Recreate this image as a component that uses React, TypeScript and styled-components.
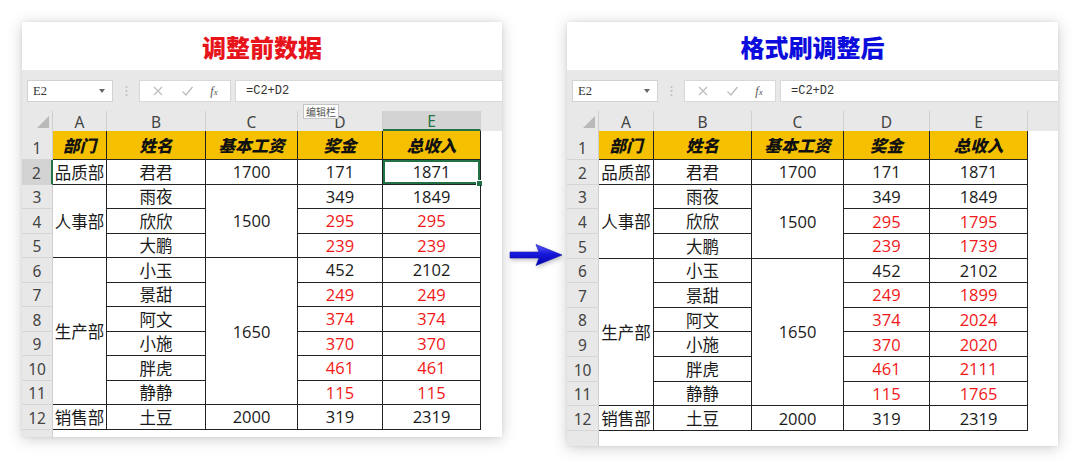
import React from 'react';
import styled, { createGlobalStyle } from 'styled-components';

const CJK = `"Open Sans", "Noto Sans CJK SC", sans-serif`;
const UI = `"Noto Sans", "Noto Sans CJK SC", sans-serif`;

const Global = createGlobalStyle`
  html, body { margin: 0; padding: 0; background: #ffffff; }
  body { width: 1080px; height: 468px; overflow: hidden; font-family: ${CJK}; }
`;

const Page = styled.div`
  display: flex;
  align-items: flex-start;
  box-sizing: border-box;
  width: 1080px;
  height: 468px;
  padding: 22px 0 0 22px;
`;

const Card = styled.div<{ $w: number; $h: number }>`
  position: relative;
  flex: none;
  width: ${(p) => p.$w}px;
  height: ${(p) => p.$h}px;
  display: flex;
  flex-direction: column;
  background: #fff;
  overflow: hidden;
  box-shadow: 0 2px 14px rgba(0, 0, 0, 0.2), 0 0 3px rgba(0, 0, 0, 0.08);
`;

const Title = styled.div<{ $color: string }>`
  flex: none;
  height: 48px;
  display: flex;
  align-items: center;
  justify-content: center;
  font: 900 24px "Noto Sans CJK SC", sans-serif;
  color: ${(p) => p.$color};
`;

const Toolbar = styled.div`
  flex: none;
  height: 41px;
  box-sizing: border-box;
  padding: 10px 0 0 5px;
  display: flex;
  align-items: flex-start;
  background: #e8e8e8;
`;

const NameBox = styled.div`
  flex: none;
  width: 86px;
  height: 22px;
  box-sizing: border-box;
  border: 1px solid #d2d2d2;
  background: #fff;
  display: flex;
  align-items: center;
  justify-content: space-between;
  padding: 0 7px 0 5px;
  font: 12.5px "Liberation Serif", serif;
  color: #333;
`;

const Caret = styled.span`
  width: 0;
  height: 0;
  border-left: 3.5px solid transparent;
  border-right: 3.5px solid transparent;
  border-top: 4px solid #666;
`;

const Grip = styled.div`
  flex: none;
  width: 26px;
  height: 22px;
  display: flex;
  align-items: center;
  justify-content: center;
`;

const FxBox = styled.div`
  flex: none;
  width: 92px;
  height: 22px;
  box-sizing: border-box;
  border: 1px solid #d8d8d8;
  background: #fff;
  display: flex;
  align-items: center;
  justify-content: space-around;
  padding: 0 4px;
`;

const Fx = styled.span`
  font: italic 12px "Liberation Serif", serif;
  color: #555;
  & > small { font-size: 9px; }
`;

const Formula = styled.div`
  flex: 1;
  height: 22px;
  margin-left: 4px;
  box-sizing: border-box;
  border: 1px solid #d8d8d8;
  border-right: none;
  background: #fff;
  display: flex;
  align-items: center;
  padding-left: 10px;
  font: 12px "Liberation Mono", monospace;
  color: #333;
`;

const Sheet = styled.div<{ $cols: string; $rows: string }>`
  flex: 1;
  display: grid;
  grid-template-columns: ${(p) => p.$cols};
  grid-template-rows: ${(p) => p.$rows};
  background: #fff;
`;

const Corner = styled.div`
  grid-row: 1;
  grid-column: 1;
  position: relative;
  background: #e8e8e8;
  border-right: 1px solid #cfcfcf;
  &::after {
    content: '';
    position: absolute;
    right: 3px;
    bottom: 3px;
    width: 0;
    height: 0;
    border-left: 12px solid transparent;
    border-bottom: 12px solid #b9b9b9;
  }
`;

const ColHead = styled.div<{ $col: number; $active?: boolean }>`
  grid-row: 1;
  grid-column: ${(p) => p.$col};
  box-sizing: border-box;
  display: flex;
  align-items: center;
  justify-content: center;
  background: ${(p) => (p.$active ? '#d3d3d3' : '#e8e8e8')};
  border-right: 1px solid #cfcfcf;
  border-bottom: ${(p) => (p.$active ? '2px solid #217346' : 'none')};
  font: 15.5px ${UI};
  color: ${(p) => (p.$active ? '#217346' : '#444')};
  padding-top: 1px;
`;

const HeadFill = styled.div`
  grid-row: 1;
  grid-column: 7;
  background: #e8e8e8;
`;

const RowHead = styled.div<{ $row: number; $active?: boolean }>`
  grid-row: ${(p) => p.$row};
  grid-column: 1;
  box-sizing: border-box;
  display: flex;
  align-items: flex-end;
  justify-content: center;
  padding-bottom: 1px;
  background: ${(p) => (p.$active ? '#d3d3d3' : '#e8e8e8')};
  border-bottom: 1px solid #d5d5d5;
  border-right: ${(p) => (p.$active ? '2px solid #217346' : '1px solid #cfcfcf')};
  font: 15.5px ${UI};
  line-height: 20px;
  color: #444;
`;

const Head = styled.div<{ $col: number }>`
  grid-row: 2;
  grid-column: ${(p) => p.$col};
  box-sizing: border-box;
  display: flex;
  align-items: center;
  justify-content: center;
  background: #f5c000;
  border-right: 1px solid #222;
  border-bottom: 1px solid #222;
  font: italic 900 16.5px "Noto Sans CJK SC", sans-serif;
  color: #111;
`;

const Cell = styled.div<{ $row: number; $col: number; $span?: number; $red?: boolean; $selected?: boolean }>`
  grid-row: ${(p) => p.$row} / span ${(p) => p.$span ?? 1};
  grid-column: ${(p) => p.$col};
  position: relative;
  box-sizing: border-box;
  display: flex;
  align-items: center;
  justify-content: center;
  border-right: 1px solid #222;
  border-bottom: 1px solid #222;
  font-size: 16.5px;
  color: ${(p) => (p.$red ? '#f01818' : '#1a1a1a')};
  box-shadow: ${(p) => (p.$selected ? 'inset 0 0 0 2px #217346' : 'none')};
  &::after {
    content: '';
    display: ${(p) => (p.$selected ? 'block' : 'none')};
    position: absolute;
    right: -3px;
    bottom: -3px;
    width: 5px;
    height: 5px;
    background: #217346;
    border: 1px solid #fff;
  }
`;

const BottomHead = styled.div`
  grid-row: 14;
  grid-column: 1;
  background: #e8e8e8;
  border-right: 1px solid #cfcfcf;
`;

const Tip = styled.div`
  position: absolute;
  left: 281px;
  top: 82px;
  height: 13px;
  padding: 0 2px;
  background: #fff;
  border: 1px solid #c4c4c4;
  font: 10px "Noto Sans CJK SC", sans-serif;
  line-height: 13px;
  color: #555;
`;

const ArrowWrap = styled.div`
  flex: none;
  width: 65px;
  box-sizing: border-box;
  padding: 221px 0 0 7px;
  & svg { display: block; filter: drop-shadow(1px 2px 2px rgba(0, 0, 0, 0.25)); }
`;

type Row = { dept?: [string, number]; name: string; base?: [string, number]; bonus: string; total: string; red?: boolean };

const before: Row[] = [
  { dept: ['品质部', 1], name: '君君', base: ['1700', 1], bonus: '171', total: '1871' },
  { dept: ['人事部', 3], name: '雨夜', base: ['1500', 3], bonus: '349', total: '1849' },
  { name: '欣欣', bonus: '295', total: '295', red: true },
  { name: '大鹏', bonus: '239', total: '239', red: true },
  { dept: ['生产部', 6], name: '小玉', base: ['1650', 6], bonus: '452', total: '2102' },
  { name: '景甜', bonus: '249', total: '249', red: true },
  { name: '阿文', bonus: '374', total: '374', red: true },
  { name: '小施', bonus: '370', total: '370', red: true },
  { name: '胖虎', bonus: '461', total: '461', red: true },
  { name: '静静', bonus: '115', total: '115', red: true },
  { dept: ['销售部', 1], name: '土豆', base: ['2000', 1], bonus: '319', total: '2319' },
];

const afterTotals = ['1871', '1849', '1795', '1739', '2102', '1899', '2024', '2020', '2111', '1765', '2319'];
const after: Row[] = before.map((r, i) => ({ ...r, total: afterTotals[i] }));

const Cross = () => (
  <svg width="12" height="12" viewBox="0 0 12 12">
    <path d="M2 2 L10 10 M10 2 L2 10" stroke="#bdbdbd" strokeWidth="1.3" fill="none" />
  </svg>
);

const Check = () => (
  <svg width="13" height="12" viewBox="0 0 13 12">
    <path d="M1.5 6.5 L5 10 L11.5 2" stroke="#bdbdbd" strokeWidth="1.3" fill="none" />
  </svg>
);

const Dots = () => (
  <svg width="3" height="12" viewBox="0 0 3 12">
    <circle cx="1.5" cy="2" r="1" fill="#bdbdbd" />
    <circle cx="1.5" cy="6" r="1" fill="#bdbdbd" />
    <circle cx="1.5" cy="10" r="1" fill="#bdbdbd" />
  </svg>
);

const Arrow = () => (
  <svg width="54" height="24" viewBox="0 0 54 24">
    <defs>
      <linearGradient id="ag" x1="0" y1="0" x2="0" y2="1">
        <stop offset="0" stopColor="#5a5af8" />
        <stop offset="0.45" stopColor="#1818dc" />
        <stop offset="1" stopColor="#0000a8" />
      </linearGradient>
    </defs>
    <path d="M1 9 H30 L27 1.5 L53 12 L27 22.5 L30 15 H1 Z" fill="url(#ag)" stroke="#0a0ab8" strokeWidth="0.6" />
  </svg>
);

const SheetView = ({ rows, cols, rowsDef, selected }: { rows: Row[]; cols: string; rowsDef: string; selected?: boolean }) => (
  <Sheet $cols={cols} $rows={rowsDef}>
    <Corner />
    {['A', 'B', 'C', 'D', 'E'].map((l, i) => (
      <ColHead key={l} $col={i + 2} $active={selected && l === 'E'}>
        {l}
      </ColHead>
    ))}
    <HeadFill />
    {Array.from({ length: 12 }, (_, i) => (
      <RowHead key={i} $row={i + 2} $active={selected && i === 1}>
        {i + 1}
      </RowHead>
    ))}
    <BottomHead />
    {['部门', '姓名', '基本工资', '奖金', '总收入'].map((h, i) => (
      <Head key={h} $col={i + 2}>
        {h}
      </Head>
    ))}
    {rows.map((r, i) => {
      const row = i + 3;
      return (
        <React.Fragment key={i}>
          {r.dept && (
            <Cell $row={row} $col={2} $span={r.dept[1]}>
              {r.dept[0]}
            </Cell>
          )}
          <Cell $row={row} $col={3}>
            {r.name}
          </Cell>
          {r.base && (
            <Cell $row={row} $col={4} $span={r.base[1]}>
              {r.base[0]}
            </Cell>
          )}
          <Cell $row={row} $col={5} $red={r.red}>
            {r.bonus}
          </Cell>
          <Cell $row={row} $col={6} $red={r.red} $selected={selected && i === 0}>
            {r.total}
          </Cell>
        </React.Fragment>
      );
    })}
  </Sheet>
);

const Bar = ({ tip }: { tip?: boolean }) => (
  <>
    <Toolbar>
      <NameBox>
        <span>E2</span>
        <Caret />
      </NameBox>
      <Grip>
        <Dots />
      </Grip>
      <FxBox>
        <Cross />
        <Check />
        <Fx>
          f<small>x</small>
        </Fx>
      </FxBox>
      <Formula>=C2+D2</Formula>
    </Toolbar>
    {tip && <Tip>编辑栏</Tip>}
  </>
);

export default function App() {
  return (
    <>
      <Global />
      <Page>
        <Card $w={480} $h={415}>
          <Title $color="#e8141c">调整前数据</Title>
          <Bar tip />
          <SheetView
            rows={before}
            cols="31px 54px 99px 92px 85px 98px 1fr"
            rowsDef="20px 29px repeat(11, 24.5px) 1fr"
            selected
          />
        </Card>
        <ArrowWrap>
          <Arrow />
        </ArrowWrap>
        <Card $w={491} $h={424}>
          <Title $color="#0c0cdc">格式刷调整后</Title>
          <Bar />
          <SheetView
            rows={after}
            cols="32px 55px 98px 92px 86px 98px 1fr"
            rowsDef="20px 29px repeat(11, 24.64px) 1fr"
          />
        </Card>
      </Page>
    </>
  );
}
